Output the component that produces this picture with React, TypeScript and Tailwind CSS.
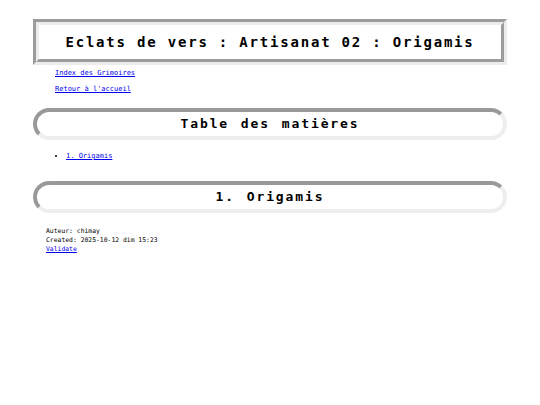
export default function App() {
  return (
    <div className="min-h-[405px] bg-white px-[33px] pt-[19px] font-['DejaVu_Sans_Mono',monospace] text-black">
      <div className="border-[3px] border-t-[#9c9c9c] border-l-[#9c9c9c] border-b-[#ececec] border-r-[#ececec]">
        <h1 className="flex h-[40px] items-center justify-center border-[3px] border-t-[#ececec] border-l-[#ececec] border-b-[#9c9c9c] border-r-[#9c9c9c] text-[14px] font-bold tracking-[1.8px]">
          Eclats de vers : Artisanat 02 : Origamis
        </h1>
      </div>

      <div className="mt-[4px] flex flex-col gap-[7px] pl-[22px] text-[7px] leading-[9px]">
        <a href="#" className="text-[#0000ee] underline">Index des Grimoires</a>
        <a href="#" className="text-[#0000ee] underline">Retour à l'accueil</a>
      </div>

      <h2 className="mt-[14px] flex h-[32px] items-center justify-center rounded-[18px] border-4 border-t-[#999] border-l-[#999] border-b-[#eee] border-r-[#eee] text-[13px] font-bold tracking-[1.9px] [word-spacing:2px]">
        Table des matières
      </h2>

      <ul className="mt-[12px] list-disc pl-[33px] text-[7px] leading-[9px]">
        <li>
          <a href="#" className="text-[#0000ee] underline">1. Origamis</a>
        </li>
      </ul>

      <h2 className="mt-[20px] flex h-[32px] items-center justify-center rounded-[18px] border-4 border-t-[#999] border-l-[#999] border-b-[#eee] border-r-[#eee] text-[13px] font-bold tracking-[1.9px] [word-spacing:2px]">
        1. Origamis
      </h2>

      <div className="mt-[14px] pl-[13px] text-[6.4px] leading-[9px]">
        <div>Auteur: chimay</div>
        <div>Created: 2025-10-12 dim 15:23</div>
        <a href="#" className="text-[#0000ee] underline">Validate</a>
      </div>
    </div>
  );
}
